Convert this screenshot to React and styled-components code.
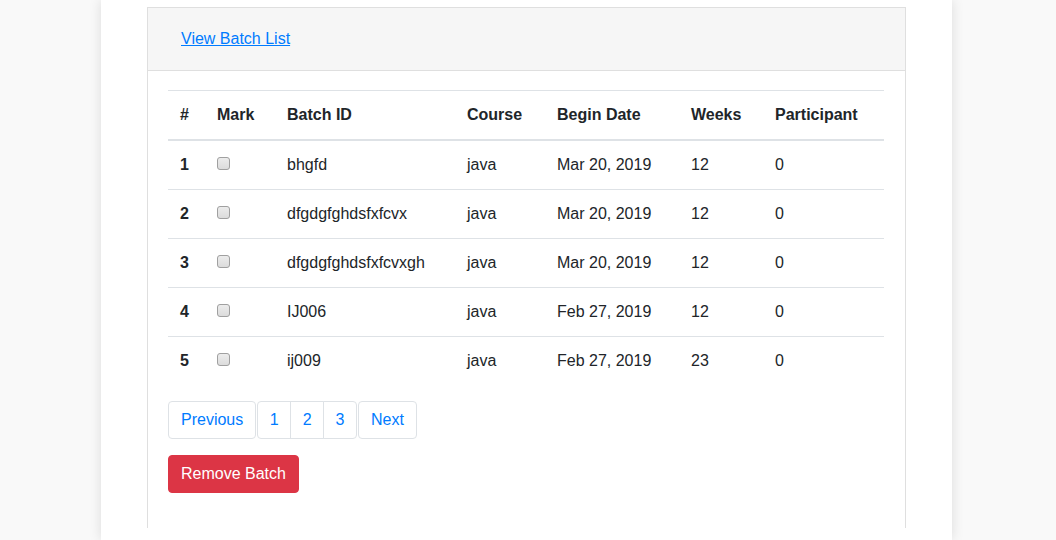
import styled, { createGlobalStyle } from "styled-components";

const GlobalStyle = createGlobalStyle`
  html, body {
    margin: 0;
    padding: 0;
    background: #f9f9f9;
    font-family: "Liberation Sans", Arial, sans-serif;
    font-size: 16px;
    color: #212529;
  }
`;

const batches = [
  { id: 1, batchId: "bhgfd", course: "java", begin: "Mar 20, 2019", weeks: 12, participant: 0 },
  { id: 2, batchId: "dfgdgfghdsfxfcvx", course: "java", begin: "Mar 20, 2019", weeks: 12, participant: 0 },
  { id: 3, batchId: "dfgdgfghdsfxfcvxgh", course: "java", begin: "Mar 20, 2019", weeks: 12, participant: 0 },
  { id: 4, batchId: "IJ006", course: "java", begin: "Feb 27, 2019", weeks: 12, participant: 0 },
  { id: 5, batchId: "ij009", course: "java", begin: "Feb 27, 2019", weeks: 23, participant: 0 },
];

const columns = [
  { label: "#", width: 37 },
  { label: "Mark", width: 70 },
  { label: "Batch ID", width: 180 },
  { label: "Course", width: 90 },
  { label: "Begin Date", width: 134 },
  { label: "Weeks", width: 84 },
  { label: "Participant", width: 121 },
];

export default function App() {
  return (
    <>
      <GlobalStyle />
      <Page>
        <Container>
          <Card>
            <CardHeader>
              <HeaderLink href="#">View Batch List</HeaderLink>
            </CardHeader>
            <CardBody>
              <Table>
                <thead>
                  <tr>
                    {columns.map(col => (
                      <Th key={col.label} $width={col.width}>{col.label}</Th>
                    ))}
                  </tr>
                </thead>
                <tbody>
                  {batches.map(b => (
                    <tr key={b.id}>
                      <Td $bold>{b.id}</Td>
                      <Td>
                        <Check type="checkbox" />
                      </Td>
                      <Td>{b.batchId}</Td>
                      <Td>{b.course}</Td>
                      <Td>{b.begin}</Td>
                      <Td>{b.weeks}</Td>
                      <Td>{b.participant}</Td>
                    </tr>
                  ))}
                </tbody>
              </Table>

              <Pagination>
                <PageGroup>
                  <PageLink href="#">Previous</PageLink>
                </PageGroup>
                <PageGroup>
                  {[1, 2, 3].map(n => (
                    <PageLink key={n} href="#" $compact>{n}</PageLink>
                  ))}
                </PageGroup>
                <PageGroup>
                  <PageLink href="#">Next</PageLink>
                </PageGroup>
              </Pagination>

              <DangerButton type="button">Remove Batch</DangerButton>
            </CardBody>
          </Card>
        </Container>
      </Page>
    </>
  );
}

const Page = styled.div`
  width: 1056px;
  height: 540px;
  overflow: hidden;
`;

const Container = styled.div`
  box-sizing: border-box;
  width: 851px;
  height: 540px;
  margin-left: 101px;
  padding: 7px 46px 0;
  background: #fff;
  box-shadow: 0 0 12px rgba(0, 0, 0, 0.12);
`;

const Card = styled.div`
  box-sizing: border-box;
  width: 759px;
  height: 521px;
  border: 1px solid #dfdfdf;
  border-bottom: none;
  background: #fff;
`;

const CardHeader = styled.div`
  box-sizing: border-box;
  height: 63px;
  padding: 19px 33px;
  line-height: 24px;
  background: #f6f6f6;
  border-bottom: 1px solid #dfdfdf;
`;

const HeaderLink = styled.a`
  color: #007bff;
  text-decoration: underline;
  font-size: 16px;
`;

const CardBody = styled.div`
  padding: 19px 20px 20px;
`;

const Table = styled.table`
  width: 716px;
  border-collapse: collapse;
  margin-bottom: 16px;
  table-layout: fixed;
`;

const Th = styled.th`
  width: ${p => p.$width}px;
  box-sizing: border-box;
  padding: 12px;
  text-align: left;
  font-weight: 700;
  line-height: 24px;
  border-top: 1px solid #dee2e6;
  border-bottom: 2px solid #dee2e6;
`;

const Td = styled.td`
  padding: 12px;
  line-height: 24px;
  font-weight: ${p => (p.$bold ? 700 : 400)};
  border-top: 1px solid #dee2e6;
  vertical-align: top;
`;

const Check = styled.input`
  appearance: none;
  box-sizing: border-box;
  width: 13px;
  height: 13px;
  margin: 4px 0 0 0;
  vertical-align: top;
  border: 1px solid #a0a0a0;
  border-radius: 3px;
  background: linear-gradient(#ececec, #dcdcdc);
`;

const Pagination = styled.div`
  display: flex;
  gap: 1px;
  margin-bottom: 16px;
`;

const PageGroup = styled.div`
  display: flex;
  & > a:first-child {
    border-top-left-radius: 4px;
    border-bottom-left-radius: 4px;
  }
  & > a:last-child {
    border-top-right-radius: 4px;
    border-bottom-right-radius: 4px;
  }
  & > a + a {
    margin-left: -1px;
  }
`;

const PageLink = styled.a`
  display: block;
  box-sizing: border-box;
  height: 38px;
  padding: 8px ${p => (p.$compact ? 11.5 : 12)}px;
  line-height: 20px;
  color: #007bff;
  text-decoration: none;
  background: #fff;
  border: 1px solid #dee2e6;
`;

const DangerButton = styled.button`
  display: block;
  box-sizing: border-box;
  height: 38px;
  padding: 6px 12px;
  font-family: "Liberation Sans", Arial, sans-serif;
  font-size: 16px;
  line-height: 24px;
  color: #fff;
  background: #dc3545;
  border: 1px solid #dc3545;
  border-radius: 4px;
`;
